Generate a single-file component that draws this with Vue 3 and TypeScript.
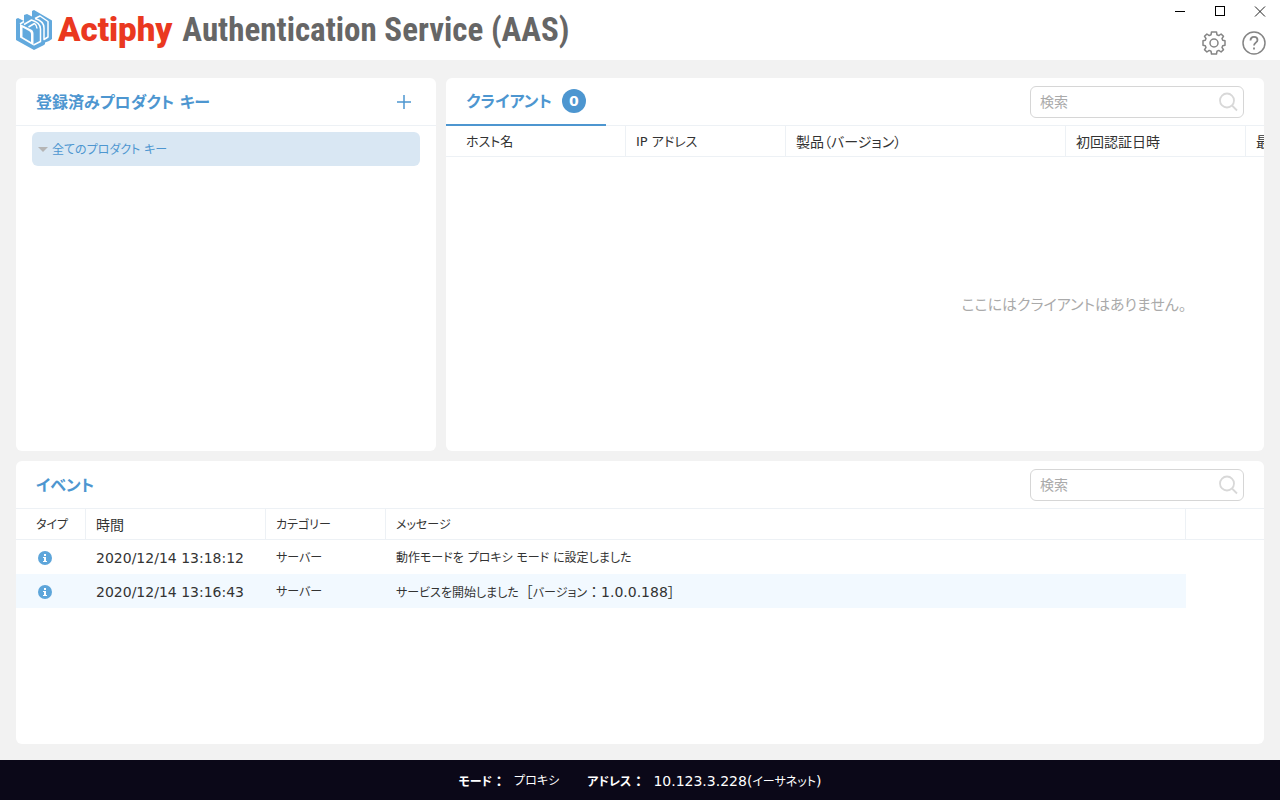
<script setup lang="ts">
import { ref } from 'vue'

interface Column {
  label: string
  width: number
  size: 'kana' | 'mid' | 'kanji'
}

interface EventRow {
  time: string
  category: string
  message: string
  version?: string
}

const clientColumns: Column[] = [
  { label: 'ホスト名', width: 180, size: 'mid' },
  { label: 'IP アドレス', width: 160, size: 'mid' },
  { label: '製品（バージョン）', width: 280, size: 'kanji' },
  { label: '初回認証日時', width: 180, size: 'kanji' },
  { label: '最', width: 456, size: 'kanji' },
]

const eventColumns: Column[] = [
  { label: 'タイプ', width: 70, size: 'kana' },
  { label: '時間', width: 180, size: 'kanji' },
  { label: 'カテゴリー', width: 120, size: 'kana' },
  { label: 'メッセージ', width: 800, size: 'kana' },
]

const events: EventRow[] = [
  { time: '2020/12/14 13:18:12', category: 'サーバー', message: '動作モードを プロキシ モード に設定しました' },
  { time: '2020/12/14 13:16:43', category: 'サーバー', message: 'サービスを開始しました', version: '1.0.0.188' },
]

const clientCount = ref(0)
const clientQuery = ref('')
const eventQuery = ref('')
</script>

<template>
  <div class="app">
    <header class="titlebar">
      <svg class="logo" viewBox="0 0 36 40" aria-hidden="true">
        <path fill="#62a9dd" d="M0 9l2-1 6 3V5l3-1 5 2.500V1l2-1 18 10.500V29l-3 2-4 1.500V34l-1 1-10 5L0 30z" />
        <path fill="#fff" d="M4 14l5 2.500L16 20c1 1 1.500 2 1.500 4v11.500L4 27.500z" />
        <path fill="#62a9dd" d="M6.500 17.500L13 21c1.500 1 2 2 2 3.500V32l-8.500-5z" />
        <g fill="none" stroke="#fff" stroke-width="1.500" stroke-linejoin="round">
          <path d="M4 14l4-2.500M8 14.500L15.500 10c5 1.500 9 4.500 9 9v12.500L17.500 35" />
          <path d="M12.500 17l6-3.500c2 1.500 2.500 3 2.500 5" />
          <path d="M19 8.500l5-2.500 8 5.500V27l-4 2.500V18c0-5-4-8-9-9.500" />
        </g>
      </svg>
      <h1 class="title"><span class="brand">Actiphy</span> <span class="product">Authentication Service (AAS)</span></h1>
      <div class="controls">
        <div class="window-buttons">
          <button type="button" aria-label="最小化">
            <svg viewBox="0 0 12 12"><path d="M1 5.500h10" stroke="#000" /></svg>
          </button>
          <button type="button" aria-label="最大化">
            <svg viewBox="0 0 12 12"><rect x="1.500" y="0.500" width="9" height="9" fill="none" stroke="#000" /></svg>
          </button>
          <button type="button" aria-label="閉じる">
            <svg viewBox="0 0 12 12"><path d="M1 0.500l10 10M11 0.500L1 10.500" stroke="#222" /></svg>
          </button>
        </div>
        <div class="tool-buttons">
          <button type="button" aria-label="設定">
            <svg viewBox="0 0 24 24" fill="none" stroke="#858585" stroke-width="1.500" stroke-linejoin="round">
              <path d="M9.500 1h5l.5 2.800 1.800.8 2.300-1.600 2.400 2.400-1.500 2.100.7 1.700 2.300.5v4.600l-2.300.5-.7 1.700 1.500 2.100-2.400 2.400-2.300-1.600-1.800.8-.5 2.800h-5L9 20.200l-1.800-.8L4.900 21l-2.400-2.400L4 16.500l-.7-1.700-2.300-.5V9.700l2.300-.5L4 7.500 2.500 5.400 4.900 3l2.300 1.600L9 3.800z" />
              <circle cx="12" cy="12" r="4" />
            </svg>
          </button>
          <button type="button" aria-label="ヘルプ">
            <svg viewBox="0 0 24 24" fill="none" stroke="#858585" stroke-width="1.500">
              <circle cx="12" cy="12" r="11" />
              <path stroke-width="1.800" d="M8.500 9.500c0-5 7-4.500 7-.5 0 2.500-3.500 2.800-3.500 5.500M12 16.500v2" />
            </svg>
          </button>
        </div>
      </div>
    </header>

    <main class="workspace">
      <div class="upper">
        <section class="panel">
          <div class="panel-head">
            <h2>登録済みプロダクト キー</h2>
            <button type="button" class="add" aria-label="追加">
              <svg viewBox="0 0 14 14"><path d="M7 0v14M0 7h14" stroke="#4d96d0" stroke-width="1.500" /></svg>
            </button>
          </div>
          <button type="button" class="tree-item">
            <svg viewBox="0 0 10 5"><path d="M0 0h10L5 5z" fill="#b5b5b5" /></svg>
            <span>全てのプロダクト キー</span>
          </button>
        </section>

        <section class="panel">
          <div class="panel-head">
            <button type="button" class="tab">
              <span class="tab-label">クライアント</span>
              <span class="badge">{{ clientCount }}</span>
            </button>
            <div class="search">
              <input v-model="clientQuery" type="text" placeholder="検索" aria-label="クライアントを検索">
              <svg viewBox="0 0 20 20"><circle cx="9" cy="8.500" r="7" /><path d="M14 13.500l5 5" /></svg>
            </div>
          </div>
          <div class="table-clip">
            <table class="clients">
              <colgroup>
                <col v-for="c in clientColumns" :key="c.label" :style="{ width: c.width + 'px' }">
              </colgroup>
              <thead>
                <tr><th v-for="c in clientColumns" :key="c.label" :class="c.size" scope="col">{{ c.label }}</th></tr>
              </thead>
              <tbody>
                <tr><td :colspan="clientColumns.length" class="empty">ここにはクライアントはありません。</td></tr>
              </tbody>
            </table>
          </div>
        </section>
      </div>

      <section class="panel">
        <div class="panel-head">
          <h2>イベント</h2>
          <div class="search">
            <input v-model="eventQuery" type="text" placeholder="検索" aria-label="イベントを検索">
            <svg viewBox="0 0 20 20"><circle cx="9" cy="8.500" r="7" /><path d="M14 13.500l5 5" /></svg>
          </div>
        </div>
        <table class="events">
          <colgroup>
            <col v-for="c in eventColumns" :key="c.label" :style="{ width: c.width + 'px' }">
            <col>
          </colgroup>
          <thead>
            <tr>
              <th v-for="c in eventColumns" :key="c.label" :class="c.size" scope="col">{{ c.label }}</th>
              <td class="filler"></td>
            </tr>
          </thead>
          <tbody>
            <tr v-for="e in events" :key="e.time">
              <td>
                <svg class="info" viewBox="0 0 14 14" role="img" aria-label="情報">
                  <circle cx="7" cy="7" r="7" fill="#5da5da" />
                  <path fill="#fff" d="M6 3h2v2H6zM5 6h3v4h1v1H5v-1h1V7H5z" />
                </svg>
              </td>
              <td>{{ e.time }}</td>
              <td class="kana">{{ e.category }}</td>
              <td class="kana">{{ e.message }}<template v-if="e.version"> <span class="wide">［</span>バージョン<span class="wide">：</span><span class="latin">{{ e.version }}］</span></template></td>
              <td class="filler"></td>
            </tr>
          </tbody>
        </table>
      </section>
    </main>

    <footer class="statusbar">
      <div><b>モード<span class="wide">：</span></b><span>プロキシ</span></div>
      <div><b>アドレス<span class="wide">：</span></b><span><span class="latin">10.123.3.228(</span>イーサネット<span class="latin">)</span></span></div>
    </footer>
  </div>
</template>

<style>
body {
  margin: 0;
  background: #f2f2f2;
}
</style>

<style scoped>
.app {
  min-height: 100vh;
  display: flex;
  flex-direction: column;
  background: #f2f2f2;
  color: #333;
  font-family: "DejaVu Sans", "Noto Sans CJK JP", sans-serif;
  font-size: 14px;
  line-height: 20px;
  font-feature-settings: "palt";
}

.app * {
  box-sizing: border-box;
}

button {
  display: flex;
  align-items: center;
  justify-content: center;
  border: 0;
  padding: 0;
  background: none;
  color: inherit;
  font: inherit;
  font-feature-settings: inherit;
}

.titlebar {
  display: flex;
  align-items: center;
  height: 60px;
  padding-left: 16px;
  background: #fff;
}

.logo {
  width: 36px;
  height: 40px;
}

.title {
  display: flex;
  align-items: center;
  gap: 10px;
  margin: 0 0 0 6px;
  font-family: "Roboto Condensed", "Liberation Sans Narrow", Roboto, sans-serif;
  font-size: 33px;
  line-height: 40px;
  white-space: nowrap;
}

.brand {
  color: #ea3820;
  font-family: Roboto, sans-serif;
  font-weight: 900;
}

.product {
  color: #666;
}

.controls {
  display: flex;
  flex-direction: column;
  align-items: flex-end;
  align-self: stretch;
  margin-left: auto;
}

.window-buttons,
.tool-buttons {
  display: flex;
}

.window-buttons button {
  width: 40px;
  height: 24px;
}

.window-buttons svg {
  width: 12px;
  height: 12px;
}

.tool-buttons {
  gap: 16px;
  padding: 7px 14px 0 0;
}

.tool-buttons svg {
  width: 24px;
  height: 24px;
}

.workspace {
  flex: 1;
  display: grid;
  grid-template-rows: 373fr 283fr;
  grid-template-columns: minmax(0, 1fr);
  gap: 10px;
  padding: 18px 16px 16px;
}

.upper {
  display: grid;
  grid-template-columns: 420px minmax(0, 1fr);
  gap: 10px;
}

.panel {
  background: #fff;
  border-radius: 6px;
  overflow: hidden;
}

.panel-head {
  display: flex;
  align-items: center;
  justify-content: space-between;
  height: 48px;
  padding: 0 20px;
  border-bottom: 1px solid #edf1f5;
}

h2,
.tab {
  margin: 0;
  color: #4d96d0;
  font-size: 16px;
  font-weight: 700;
}

h2,
.tab-label,
.tree-item span {
  padding-top: 2px;
}

.add {
  width: 24px;
  height: 24px;
}

.add svg {
  width: 14px;
  height: 14px;
}

.tree-item {
  width: calc(100% - 32px);
  height: 34px;
  margin: 6px 16px;
  padding: 0 6px;
  justify-content: flex-start;
  gap: 4px;
  border-radius: 6px;
  background: #d9e7f3;
  color: #4d96d0;
  font-size: 12px;
}

.tree-item svg {
  width: 10px;
  height: 5px;
}

.tab {
  align-self: stretch;
  width: 160px;
  gap: 10px;
  margin: 0 0 -1px -20px;
  border-bottom: 2px solid #4d96d0;
}

.badge {
  width: 24px;
  height: 24px;
  border-radius: 50%;
  background: #4d96d0;
  color: #fff;
  font-size: 14px;
  line-height: 24px;
}

.search {
  display: flex;
  align-items: center;
  width: 214px;
  height: 32px;
  padding: 0 5px 0 9px;
  border: 1px solid #d6d6d6;
  border-radius: 6px;
}

.search input {
  flex: 1;
  min-width: 0;
  padding: 0;
  border: 0;
  outline: 0;
  background: none;
  color: #333;
  font: inherit;
}

.search input::placeholder {
  color: #aaa;
  opacity: 1;
}

.search svg {
  width: 20px;
  height: 20px;
  fill: none;
  stroke: #d8d8d8;
  stroke-width: 1.800;
}

.table-clip {
  overflow: hidden;
}

table {
  table-layout: fixed;
  border-collapse: separate;
  border-spacing: 0;
}

.clients {
  width: 1256px;
}

.events {
  width: 100%;
}

th,
td {
  padding: 2px 0 0 10px;
  text-align: left;
  font-weight: 400;
  white-space: nowrap;
}

th,
thead td {
  height: 31px;
  border-bottom: 1px solid #edf1f5;
}

th {
  border-right: 1px solid #edf1f5;
}

th:first-child,
td:first-child {
  padding-left: 20px;
}

tbody td {
  height: 34px;
}

.kana {
  font-size: 12px;
}

.mid {
  font-size: 13px;
}

.latin {
  font-size: 14px;
}

.wide {
  font-size: 14px;
  font-feature-settings: normal;
}

.events tbody tr:nth-child(even) td:not(.filler) {
  background: #f2f9ff;
}

.clients .empty {
  height: 294px;
  padding: 2px 0 0;
  text-align: center;
  color: #aaa;
  font-size: 15px;
}

.info {
  display: block;
  width: 14px;
  height: 14px;
  margin-left: 2px;
}

.statusbar {
  display: flex;
  align-items: center;
  justify-content: center;
  gap: 28px;
  height: 40px;
  padding-top: 2px;
  background: #0b0818;
  color: #fff;
  font-size: 12px;
}

.statusbar div {
  display: flex;
  gap: 8px;
}
</style>
